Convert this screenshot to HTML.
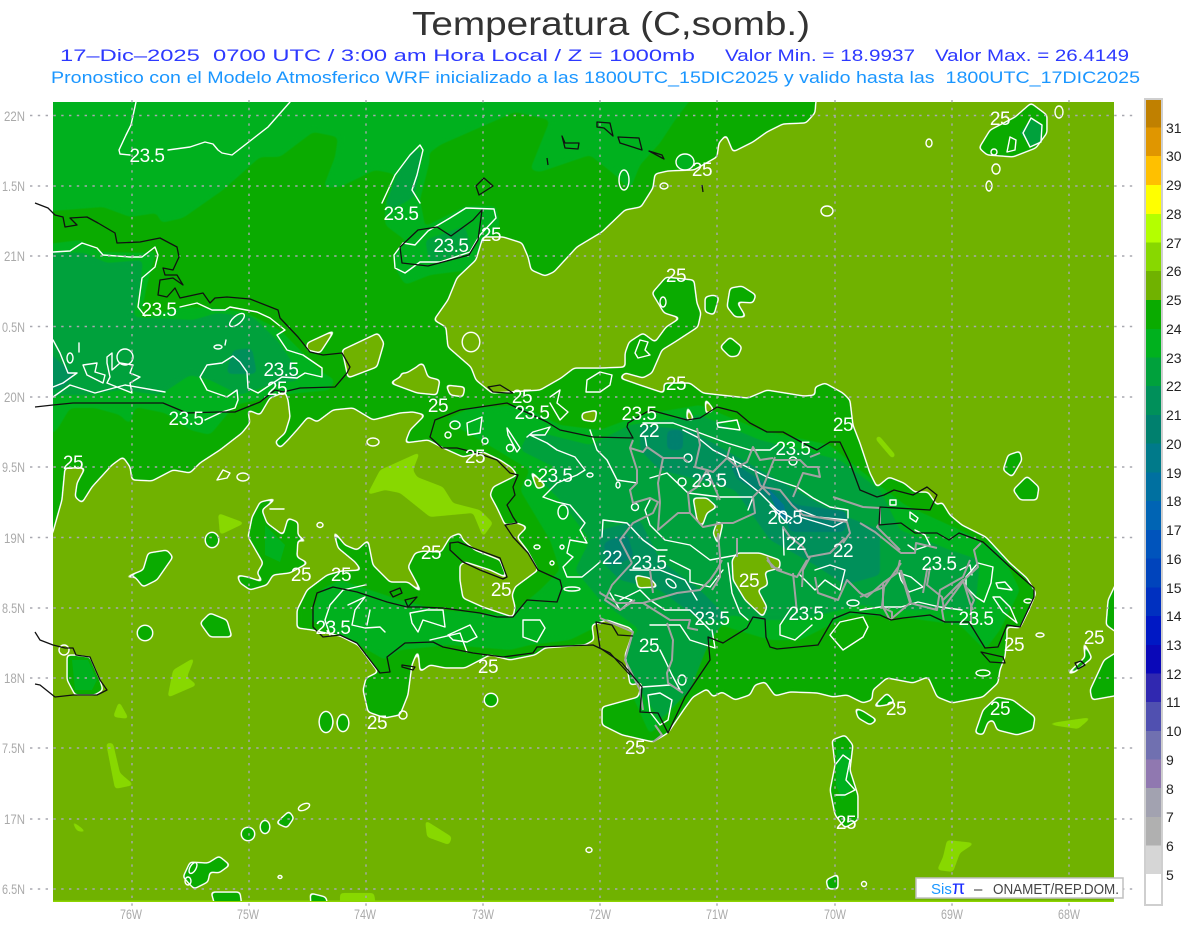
<!DOCTYPE html>
<html><head><meta charset="utf-8"><title>Temperatura</title>
<style>html,body{margin:0;padding:0;background:#fff}svg{display:block;font-family:"Liberation Sans",sans-serif}
.w{fill:none;stroke:#fff;stroke-width:1.4;stroke-linejoin:round;stroke-linecap:round}
.k{fill:none;stroke:#111;stroke-width:1.3;stroke-linejoin:round}
.g{fill:none;stroke:#a3a3a3;stroke-width:2;stroke-linejoin:round}
.l text{fill:#fff;font-size:19px;text-anchor:middle;letter-spacing:-.5px}
.c text{fill:#222;font-size:14px}
.a text{fill:#aaa;font-size:14px}
</style></head><body>
<svg width="1200" height="927" viewBox="0 0 1200 927" xmlns="http://www.w3.org/2000/svg">
<defs>
<clipPath id="p"><rect x="53" y="102" width="1061" height="799"/></clipPath>
<filter id="f" filterUnits="userSpaceOnUse" x="0" y="60" width="1200" height="880" color-interpolation-filters="sRGB">
<feGaussianBlur stdDeviation="1.8"/><feComponentTransfer><feFuncA type="linear" slope="8" intercept="-3.5"/></feComponentTransfer>
</filter>
<filter id="z" filterUnits="userSpaceOnUse" x="0" y="60" width="1200" height="880" color-interpolation-filters="sRGB">
<feGaussianBlur stdDeviation="3"/><feComponentTransfer><feFuncA type="linear" slope="5" intercept="-2"/></feComponentTransfer>
</filter>
<filter id="o" filterUnits="userSpaceOnUse" x="0" y="60" width="1200" height="880" color-interpolation-filters="sRGB">
<feGaussianBlur in="SourceAlpha" stdDeviation="1.8" result="b"/>
<feComponentTransfer in="b" result="i"><feFuncA type="linear" slope="8" intercept="-4.8"/></feComponentTransfer>
<feComponentTransfer in="b" result="u"><feFuncA type="linear" slope="8" intercept="-2.4"/></feComponentTransfer>
<feFlood flood-color="#fff" result="w"/>
<feComposite in="w" in2="u" operator="in" result="wo"/>
<feComposite in="wo" in2="i" operator="out"/>
</filter>
<path id="a" d="M817,90 815,113 806,123 783,124 767,132 753,142 733,152 726,135 719,143 717,157 694,170 668,171 655,174 653,188 641,207 625,210 602,232 577,247 554,272 545,276 531,270 528,257 522,243 503,237 483,237 476,260 457,278 448,300 434,320 446,327 448,347 471,367 476,380 492,393 540,390 561,378 574,368 600,368 625,367 625,353 629,342 643,333 655,342 666,327 680,318 664,313 652,293 666,277 694,280 697,303 701,313 698,327 675,342 662,350 652,373 643,378 625,373 620,378 640,385 664,393 664,383 690,383 703,393 748,398 767,390 804,396 815,395 815,387 825,383 843,393 850,400 853,425 860,443 870,473 877,487 889,477 904,483 915,492 928,492 937,505 942,502 950,515 962,525 986,537 1010,563 1027,578 1036,593 1029,610 1020,628 1007,627 1007,637 1005,657 1000,670 998,683 983,697 952,703 937,697 928,677 913,683 887,678 873,690 872,700 863,703 847,695 833,697 817,693 790,692 775,696 765,682 755,685 750,695 735,700 722,692 713,697 707,689 693,697 685,708 668,733 653,742 622,735 602,725 602,707 620,702 638,697 642,683 630,685 625,655 633,632 630,628 607,620 592,625 594,640 585,645 545,648 535,655 510,660 490,655 465,668 445,668 430,665 420,672 418,650 412,665 408,695 400,715 385,718 368,712 363,690 366,678 378,672 358,645 340,636 312,630 297,628 297,610 307,590 327,575 341,571 361,570 355,562 338,548 333,530 345,545 357,550 368,540 373,565 390,582 408,582 422,593 408,567 415,553 423,551 441,552 450,537 460,533 463,540 475,550 500,560 507,578 490,570 465,562 460,565 460,580 463,598 483,607 513,617 515,607 512,595 515,587 538,570 527,550 517,537 527,527 517,523 505,525 497,508 490,495 493,487 517,475 512,468 500,460 483,452 463,457 443,448 428,440 405,443 410,430 425,415 413,412 400,413 373,420 353,408 333,410 317,422 308,417 297,430 288,440 280,448 275,442 285,433 290,417 288,400 285,392 270,398 260,415 248,410 250,423 242,433 220,450 200,463 190,473 173,470 152,481 132,480 130,467 123,457 112,465 92,487 82,503 75,497 77,483 85,468 65,468 62,500 53,532 40,560 40,90Z"/>
<clipPath id="ac"><use href="#a"/></clipPath>
<g id="hl">
<path d="M307,343 335,330 320,353 307,350Z"/>
<path d="M342,350 378,333 384,343 377,367 348,378Z"/>
<path d="M390,383 423,363 428,377 440,380 437,395 417,393Z"/>
<path d="M446,385 465,387 463,397 450,395Z"/>
<path d="M582,413 597,410 595,422 582,420Z"/>
<path d="M530,470 546,486 537,489Z"/>
<path d="M693,498 707,498 717,507 707,513 702,527 697,520Z"/>
<path d="M717,522 723,523 718,545 713,533Z"/>
<path d="M705,398 714,410 706,414Z"/>
<path d="M687,405 694,420 687,420Z"/>
<path d="M732,560 737,553 760,553 780,560 780,568 765,572 768,585 758,590 767,607 763,617 745,600 733,580Z"/>
<path d="M635,575 650,578 658,587 638,588Z"/>
<path d="M400,373 413,373 420,363 422,378 408,387Z"/>
<ellipse cx="471" cy="342" rx="9" ry="10"/>
</g>
<g id="bl">
<path d="M979,148 990,130 1015,117 1031,103 1047,115 1047,133 1036,148 1013,157 987,155Z"/>
<path d="M705,297 713,295 719,297 714,315 705,312Z"/>
<path d="M728,300 730,288 742,286 756,295 753,303 737,302 746,317 735,317 727,307Z"/>
<path d="M730,337 742,347 738,356 730,357 720,347Z"/>
<path d="M123,578 143,570 148,553 167,550 173,557 157,580 143,587 135,577Z"/>
<ellipse cx="212" cy="540" rx="7" ry="8"/><circle cx="145" cy="633" r="8"/>
<path d="M200,623 210,613 227,620 232,637 210,637Z"/>
<path d="M277,498 260,502 252,517 248,537 263,563 257,573 263,582 248,577 237,575 240,583 250,590 267,585 273,575 290,573 308,563 297,557 298,540 308,543 298,535 298,522 288,518 283,535 267,523 262,510Z"/>
<path d="M67,655 75,655 90,657 100,680 103,690 95,695 75,695 67,680Z"/>
<path d="M211,892 240,892 242,906 215,906Z"/>
<path d="M310,893 326,897 328,906 311,906Z"/>
<path d="M183,877 190,862 208,863 219,856 230,865 219,873 210,872 208,882 194,889Z"/>
<circle cx="248" cy="834" r="7"/><ellipse cx="265" cy="827" rx="5" ry="7"/>
<path d="M276,823 289,811 294,818 287,828Z"/>
<ellipse cx="326" cy="722" rx="7" ry="11"/><ellipse cx="343" cy="723" rx="6" ry="9"/><circle cx="491" cy="700" r="7"/>
<path d="M832,740 845,735 853,745 850,770 858,795 858,820 845,828 835,815 830,790 835,765Z"/>
<path d="M975,733 983,710 997,697 1013,700 1035,717 1033,730 1017,735 997,730 993,720 988,722 983,735Z"/>
<path d="M855,708 863,711 877,720 870,725 858,718Z"/>
<path d="M873,707 887,693 895,702 887,705Z"/>
<path d="M1066,675 1085,657 1083,640 1092,658 1075,672Z"/>
<path d="M1120,650 1104,660 1090,690 1092,700 1120,695Z"/>
<path d="M1120,575 1108,600 1106,625 1120,635Z"/>
<path d="M1003,470 1008,455 1020,451 1022,460 1012,477Z"/>
<path d="M1013,490 1027,476 1039,487 1037,500 1020,500Z"/>
<path d="M826,880 838,874 838,889 828,889Z"/>
</g>
</defs>
<rect width="1200" height="927" fill="#fff"/>
<text x="611" y="35" font-size="33" fill="#333" text-anchor="middle" textLength="398" lengthAdjust="spacingAndGlyphs">Temperatura (C,somb.)</text>
<text x="60" y="61" font-size="17" fill="#2d39ff" textLength="635" lengthAdjust="spacingAndGlyphs" xml:space="preserve">17–Dic–2025  0700 UTC / 3:00 am Hora Local / Z = 1000mb</text>
<text x="725" y="61" font-size="17" fill="#2d39ff" textLength="190" lengthAdjust="spacingAndGlyphs">Valor Min. = 18.9937</text>
<text x="935" y="61" font-size="17" fill="#2d39ff" textLength="194" lengthAdjust="spacingAndGlyphs">Valor Max. = 26.4149</text>
<text x="51" y="83" font-size="17" fill="#1a96ff" textLength="1089" lengthAdjust="spacingAndGlyphs" xml:space="preserve">Pronostico con el Modelo Atmosferico WRF inicializado a las 1800UTC_15DIC2025 y valido hasta las  1800UTC_17DIC2025</text>

<rect x="53" y="102" width="1061" height="800" fill="#70b200"/>
<rect x="53" y="900.5" width="1061" height="1.5" fill="#8cd400"/>
<g clip-path="url(#p)">
<!-- 26 patches -->
<g fill="#88d800" filter="url(#f)">
<path d="M367,495 380,470 420,452 413,470 417,477 443,487 453,503 480,510 493,523 483,537 473,513 430,517 400,493 385,490Z"/>
<path d="M218,513 245,523 220,535Z"/>
<path d="M195,657 187,677 197,685 167,698 165,710 173,670Z"/>
<path d="M113,717 119,701 129,719Z"/>
<path d="M106,743 113,743 120,773 134,785 115,789Z"/>
<path d="M70,819 88,833 77,831Z"/>
<path d="M425,820 452,837 449,845 427,837Z"/>
<path d="M340,893 374,893 376,906 340,906Z"/>
<path d="M947,840 975,843 960,853 953,872 937,870 943,857Z"/>
<path d="M1044,724 1092,717 1078,729Z"/>
<path d="M877,437 894,457" stroke="#88d800" stroke-width="5" fill="none"/>
</g>
<!-- 25 contour region -->
<use href="#a" fill="#0aab00" filter="url(#f)"/>
<g clip-path="url(#ac)">
<!-- zone 23-24 -->
<g fill="#00b11e" filter="url(#z)">
<path d="M40,90 698,90 675,120 660,143 640,165 630,190 615,175 590,155 540,172 530,170 550,120 515,112 440,145 400,175 375,170 340,187 323,188 335,157 338,137 313,132 280,157 260,157 223,190 183,218 161,223 157,213 130,217 103,207 40,212Z"/>
<path d="M40,245 80,240 100,252 150,253 157,248 147,285 140,320 180,307 215,308 245,312 280,330 303,353 322,372 335,380 330,390 280,395 235,405 210,435 190,430 165,413 135,407 130,425 120,415 95,408 70,408 57,430 40,440Z"/>
<path d="M445,420 470,408 520,405 560,425 600,430 640,415 700,405 760,430 830,445 860,470 905,505 960,530 1000,550 1020,590 1000,630 985,650 960,625 900,617 850,615 800,640 770,640 720,625 700,660 680,700 650,735 630,690 600,625 570,640 530,645 510,650 450,645 400,650 385,660 350,640 310,620 320,590 340,580 400,600 440,610 510,615 540,590 560,570 550,540 520,490 530,470 480,440Z"/>
<path d="M385,205 395,175 410,155 425,140 430,160 420,200 425,225 405,240 385,225Z"/>
<path d="M395,268 394,255 403,243 428,225 466,206 496,206 500,225 480,250 470,270 430,275 405,285Z"/>
</g>
<!-- zone 22-23 -->
<g fill="#00a13c" filter="url(#z)">
<path d="M40,252 85,253 107,263 143,260 140,287 133,317 193,320 217,313 253,317 277,340 293,363 300,380 270,385 240,395 210,380 190,375 160,395 120,390 90,395 60,395 40,400Z"/>
<path d="M630,425 700,415 760,440 840,460 880,490 900,530 950,550 980,560 975,610 900,610 860,605 800,620 760,620 730,615 710,640 690,690 660,720 640,690 615,650 640,630 600,600 575,570 590,540 560,500 540,480 560,470 520,450 530,430 590,445Z"/>
<path d="M385,205 397,175 412,152 422,148 419,175 414,197 395,208Z"/>
<path d="M425,240 465,226 472,250 430,264Z"/>
<path d="M470,505 500,490 505,510 480,520Z" fill="none"/>
</g>
<!-- zone 21-22 -->
<g fill="#00905a" filter="url(#z)">
<path d="M640,425 690,430 760,470 830,510 880,530 880,575 845,585 815,565 770,540 735,490 700,480 660,470 640,450Z"/>
<path d="M600,530 640,520 660,560 700,590 730,620 700,620 660,590 620,580 600,560Z"/>
<path d="M40,345 75,375 62,389 40,390Z"/>
<path d="M233,350 252,348 257,374 226,374Z"/>
</g>
<!-- zone 20-21 -->
<g fill="#00806e" filter="url(#z)">
<path d="M667,430 683,430 683,450 667,450Z"/>
<path d="M727,458 767,485 797,505 847,511 845,532 790,532 783,509 763,495 737,479Z"/>
<path d="M603,543 627,533 634,557 610,567Z"/>
</g>
<path fill="#007590" d="M768,488 784,505 788,524 778,515Z"/>
</g>
<!-- A outline, holes, blobs -->
<use href="#a" fill="#fff" filter="url(#o)"/>
<use href="#hl" fill="#70b200" filter="url(#f)"/>
<use href="#hl" fill="#fff" filter="url(#o)"/>
<use href="#bl" fill="#0aab00" filter="url(#f)"/>
<g fill="#00b11e">
<path d="M837,750 850,750 850,790 842,800 836,785Z"/>
<path d="M72,660 88,660 97,680 92,690 75,690Z"/>
<path d="M265,525 285,545 280,562 265,555Z"/>
<path d="M685,154a8,8 0 1,0 .1,0Z" />
</g>
<path fill="#00a13c" d="M1020,133 1031,118 1043,125 1042,142 1031,147Z"/>
<use href="#bl" fill="#fff" filter="url(#o)"/>
<!-- white contours -->
<g class="w">
<ellipse cx="929" cy="143" rx="3" ry="4"/><ellipse cx="1059" cy="112" rx="4" ry="6"/><ellipse cx="996" cy="169" rx="4" ry="5"/><ellipse cx="989" cy="186" rx="3" ry="5"/><ellipse cx="827" cy="211" rx="6" ry="5"/><ellipse cx="664" cy="186" rx="4" ry="3"/>
<path d="M217,480 223,470 230,473 227,478Z"/><ellipse cx="243" cy="477" rx="6" ry="4"/><ellipse cx="373" cy="442" rx="6" ry="4"/><ellipse cx="320" cy="525" rx="3" ry="2.5"/><ellipse cx="589" cy="850" rx="3" ry="2.5"/>
<circle cx="64" cy="650" r="5"/><circle cx="403" cy="715" r="4"/><ellipse cx="304" cy="807" rx="6" ry="3" transform="rotate(-25 304 807)"/><circle cx="864" cy="884" r="2.5"/>
<path d="M136,102 131,125 126,135 119,150 120,154 130,155"/>
<path d="M290,102 268,127 232,155 222,153 218,150 213,144 205,142 190,147 168,150"/>
<path d="M53,252 70,251 82,243 97,248 103,255 130,257 142,257 155,247 158,255 155,267 142,278 138,307 145,316"/>
<path d="M180,307 197,303 212,310 225,310 230,307 257,312 270,318 285,330 277,335 287,350 303,355 322,368 322,377 305,373 297,378 282,377 270,385 258,393 248,388 247,372 240,362 233,356 222,363 207,365 200,377 207,390 227,397 237,390 238,400 235,408 222,412 205,420"/>
<path d="M53,340 60,353 68,373 77,373 63,383 53,387"/>
<ellipse cx="70" cy="358" rx="3" ry="5"/><circle cx="125" cy="357" r="8"/>
<path d="M79,343 79,352"/>
<path d="M83,365 97,363 95,372 105,375 103,383 87,375Z"/>
<path d="M107,357 112,353 112,370 120,363 133,365 130,373 140,377 130,383 132,393 117,387 107,383 110,377 107,363Z"/>
<path d="M53,397 70,385 95,393 125,385 165,392"/>
<ellipse cx="237" cy="320" rx="9" ry="4" transform="rotate(-40 237 320)"/>
<ellipse cx="218" cy="347" rx="4" ry="2"/><path d="M226,340 225,345"/>
<path d="M382,203 395,175 410,155 420,145 423,150 417,175 412,190 420,203"/>
<path d="M466,208 494,209 496,218 480,235 470,252 440,262 420,262 405,273 395,268 394,255 403,243 415,245 428,231 450,218Z"/>
<ellipse cx="685" cy="162" rx="9" ry="8"/><ellipse cx="624" cy="180" rx="5" ry="10"/>
<path d="M1023,133 1031,118 1042,125 1041,142 1030,147Z"/><path d="M1007,152 1010,137 1016,140 1015,150Z"/><circle cx="994" cy="152" r="3"/>
<ellipse cx="663" cy="302" rx="3" ry="5"/>
<path d="M635,353 640,340 648,342 645,350 650,355 638,358Z"/>
<path d="M587,380 600,372 612,375 610,385 600,392 586,392Z"/>
<path d="M507,428 520,448 517,452 508,435Z"/>
<path d="M467,423 482,417 480,433 468,435Z"/>
<ellipse cx="455" cy="425" rx="5" ry="4"/><circle cx="448" cy="435" r="3"/><circle cx="485" cy="441" r="3"/><circle cx="510" cy="448" r="3.5"/>
<path d="M527,437 533,432 550,427 545,435 530,435 547,443 557,450 575,457 585,470 577,475 557,483 543,497 557,502 570,505 585,523 580,530 587,543 570,540 567,553 573,557 563,567 567,577 582,577 593,568 600,562"/>
<path d="M550,397 560,390 557,403 568,412 560,420 550,403"/>
<path d="M590,430 597,450 607,460 617,480 637,483"/>
<path d="M602,537 603,520 627,523 643,540 657,550 667,550"/>
<ellipse cx="563" cy="512" rx="5" ry="7"/><circle cx="528" cy="483" r="3"/><ellipse cx="590" cy="475" rx="3" ry="2"/><ellipse cx="618" cy="485" rx="2" ry="3"/><ellipse cx="537" cy="547" rx="3" ry="2"/><ellipse cx="562" cy="547" rx="2" ry="2"/><ellipse cx="572" cy="589" rx="8" ry="2"/><ellipse cx="552" cy="563" rx="2" ry="2"/>
<path d="M410,613 427,610 443,610 445,627 423,620 418,632 412,623Z"/>
<path d="M448,635 470,625 477,637 467,642 453,640Z"/>
<path d="M523,620 540,620 545,628 537,642 523,637Z"/>
<path d="M365,585 343,590 330,605 325,620 330,635"/>
<path d="M348,605 365,597 355,610 352,625 365,628 380,627 385,632"/>
<path d="M370,610 367,625"/>
<path d="M430,640 460,633 467,652"/>
<path d="M643,423 673,423 700,433 727,443 750,450 770,450 777,445"/>
<path d="M717,423 737,420 740,430 718,427Z"/>
<path d="M683,430 697,437 713,450 733,460 767,477 797,487 813,498 830,507 848,510 848,518"/>
<path d="M645,437 647,448"/>
<circle cx="682" cy="482" r="4"/><circle cx="688" cy="458" r="4"/><circle cx="793" cy="461" r="4"/><circle cx="635" cy="507" r="3.5"/>
<path d="M650,478 667,473 688,493 720,497 753,497 748,510"/>
<path d="M733,457 740,477 760,493 777,510 792,518 787,523 770,505"/>
<path d="M800,510 817,517 847,520 833,527 820,523 800,517Z"/>
<path d="M650,500 645,510 650,525 665,540 690,545 710,560 737,555"/>
<path d="M783,527 784,555"/>
<path d="M668,579a6,3 40 1,0 .1,0Z"/>
<path d="M670,560 690,570 690,582 710,587 723,570"/>
<path d="M728,563 732,593 740,613 748,620"/>
<path d="M630,570 660,570 685,580 697,600"/>
<path d="M620,600 640,590 650,600 665,610 690,610 700,620 710,630"/>
<path d="M650,625 680,625 690,640 715,648 712,630"/>
<path d="M610,593 620,610 632,600 615,595"/>
<path d="M642,687 670,685 680,690 672,675 665,660 660,650"/>
<path d="M648,695 660,693 672,700 668,720 660,725 650,712Z"/>
<ellipse cx="682" cy="680" rx="4" ry="5"/>
<path d="M790,610 780,625 780,635 795,640 812,625"/>
<path d="M830,635 840,622 863,617 868,627 863,637 843,650Z"/>
<ellipse cx="853" cy="603" rx="6" ry="3"/><ellipse cx="983" cy="673" rx="7" ry="3"/>
<path d="M800,575 815,590 825,580 840,590 845,570 830,565 815,570"/>
<path d="M860,610 880,607 901,607 918,602 940,607 962,610"/>
<path d="M966,587 976,597 984,602 991,583 993,567 978,563 966,577Z"/>
<path d="M996,583 1005,582 1012,590 998,588Z"/>
<path d="M993,597 1000,597 1010,607 1017,623 1003,612Z"/>
<ellipse cx="1028" cy="601" rx="4" ry="2"/>
<path d="M899,573 911,577 923,587 909,592 901,580Z"/>
<path d="M908,545 915,550 930,545 925,535 915,530"/>
<path d="M960,570 970,565 972,575"/>
<path d="M890,500 896,500 896,505 890,505Z"/>
<path d="M910,512 918,518 916,522 910,518Z"/>
<path d="M835,765 843,755 850,760 846,780 855,790 845,795 835,795"/>
<ellipse cx="193" cy="868" rx="3" ry="6" transform="rotate(30 193 868)"/><ellipse cx="188" cy="881" rx="3" ry="4"/>
<ellipse cx="280" cy="877" rx="2" ry="1.5"/>
<path d="M270,509 284,509"/>
<ellipse cx="1040" cy="635" rx="4" ry="2"/>
</g>
</g>
<!-- grid -->
<g stroke="#a8a8b0" stroke-width="1.4" stroke-dasharray="2.4 5.4" fill="none">
<path d="M30,115.5H1136M30,186H1136M30,256H1136M30,326.5H1136M30,397H1136M30,467H1136M30,537.5H1136M30,608H1136M30,678H1136M30,748H1136M30,819H1136M30,889H1136"/>
<path d="M132,100V908M249,100V908M366,100V908M483,100V908M600,100V908M717,100V908M835,100V908M952,100V908M1069,100V908"/>
</g>
<!-- gray admin lines -->
<g class="g">
<path d="M633,440 630,448 637,470 637,483 630,490 633,503 650,498 658,502 653,513 633,523 620,540 632,563"/>
<path d="M630,448 643,452 647,447 663,458 683,458 688,462"/>
<path d="M697,428 700,445 695,467 707,470 720,500"/>
<path d="M730,447 727,458 713,472 707,470"/>
<path d="M727,458 737,467 747,462 753,447 760,460 773,458"/>
<path d="M775,457 763,487 753,497 755,513 733,523 723,523 703,527 690,513 678,513 658,530 660,502"/>
<path d="M663,458 658,483 660,502"/>
<path d="M690,513 688,493 697,487 707,470"/>
<path d="M763,487 780,490 792,505 803,515 847,522 850,533 843,543"/>
<path d="M807,467 818,467 820,477 803,473 793,497"/>
<path d="M810,457 820,453"/>
<path d="M773,460 800,460 807,467"/>
<path d="M833,497 863,507 880,508 880,523 877,527 900,550"/>
<path d="M783,527 790,537 803,547 808,557 830,553 845,538"/>
<path d="M718,533 720,557 720,577 712,590"/>
<path d="M737,538 737,557"/>
<path d="M767,557 772,567 782,570"/>
<path d="M810,557 803,570 802,587"/>
<path d="M600,593 617,603 643,603 677,593 700,590 710,580 717,570 722,560"/>
<path d="M643,603 670,620 690,620 688,628 698,630"/>
<path d="M600,618 633,632 625,660 640,690 643,710"/>
<path d="M667,623 673,640 672,660 667,673 668,683 683,693"/>
<path d="M650,570 653,593"/>
<path d="M767,560 777,570 797,577 807,560"/>
<path d="M793,573 797,613"/>
<path d="M815,577 818,593 838,600 847,580 860,593 867,597 883,583 883,607 890,620"/>
<path d="M883,583 897,573 900,560"/>
<path d="M900,570 910,603 937,610 940,590 963,577 970,560"/>
<path d="M927,570 923,593"/>
<path d="M910,603 890,620"/>
<path d="M943,600 963,580 970,603 973,610"/>
<path d="M860,523 875,532 901,553 915,553 916,543 937,548"/>
<path d="M981,543 974,550 978,567 964,580 942,610 944,622"/>
<path d="M962,580 974,600 971,607 971,622"/>
<path d="M901,563 884,587 882,607 892,612 892,618"/>
<path d="M860,597 884,587"/>
<path d="M901,570 911,602"/>
<path d="M930,567 927,585 942,597 944,610"/>
<path d="M755,470 760,485 770,495"/>
<path d="M632,563 612,585 605,600 620,610 635,600"/>
<path d="M653,742 662,735 655,725"/>
</g>
<!-- black coast -->
<g class="k">
<path d="M460,410 507,403 528,413 547,422 560,430 593,437 633,438 627,427 628,423 650,410 687,420 700,418 717,407 737,412 750,423 767,432 783,432 803,443 817,450 830,442 840,442 850,463 860,490 877,497 884,495 894,490 913,495 927,487 937,495 930,510 880,507 879,525 901,523 915,533 937,533 949,540 959,533 983,542 1010,567 1034,588 1034,597 1020,627 1007,625 998,647 985,648 969,622 945,622 930,615 903,618 891,620 880,615 860,613 850,612 833,619 818,645 777,649 770,647 766,637 765,619 753,617 747,628 723,643 708,637 710,660 685,697 668,733 663,723 658,713 640,712 642,687 622,663 600,648 596,622 612,625 618,635 633,636"/>
<path d="M460,410 435,420 430,437 442,448 457,448 477,453 497,460 510,473 518,475 513,487 515,495 507,505 513,517 517,523 505,525 513,537 528,553 538,570 560,580 562,588 557,602 527,600 513,617 497,617 480,613 443,608 420,607 407,607 387,602 357,592 333,587 317,593 313,607 313,627 323,637 340,635 357,643 380,673 390,672 387,657 405,643 433,642 443,647 473,653 503,657 533,653 537,647 593,645 610,653 630,675"/>
<path d="M981,652 1003,657 1005,663 990,662Z"/>
<path d="M450,543 458,542 473,548 500,558 507,577 503,579 480,570 463,562 450,550Z"/>
<path d="M488,387 500,385 513,393 507,393 493,392Z"/>
<path d="M402,665 415,667 413,670 402,667Z"/>
<path d="M390,592 400,588 402,593 393,597Z M405,600 417,597 408,607Z"/>
<path d="M597,122 610,123 613,136 604,128 597,127Z"/>
<path d="M618,137 639,138 642,150 620,143Z"/>
<path d="M649,151 662,155 664,159Z"/>
<path d="M562,136 565,143 579,143 578,149 565,148Z"/>
<path d="M547,158 548,165M702,185 703,192"/>
<path d="M476,186 484,178 493,186 479,195Z"/>
<path d="M482,210 473,220 451,236 437,227 418,230 400,247 402,263 428,266 469,255 478,240Z"/>
<path d="M35,203 48,208 55,215 63,217 65,227 77,225 70,218 87,217 98,223 115,233 117,243 140,242 160,238 177,247 179,257 173,270 163,268 165,275 177,275 183,285 173,278 160,280 158,295 167,297 175,288 180,298 203,293 210,303 215,298 227,297 250,299 278,310 280,318 298,337 310,352 323,355 342,353 350,367 347,373 335,387 300,388 283,392 275,390 260,402 235,412 218,412 187,413 163,403 147,403 117,403 73,403 53,405 35,407"/>
<path d="M35,632 40,640 53,645 65,648 73,648 76,655 90,657 100,680 107,690 97,695 73,695 55,697 40,685 35,684"/>
<path d="M1075,663 1081,661 1085,665 1078,669Z"/>
</g>
<!-- contour labels -->
<g class="l">
<text x="147" y="162">23.5</text><text x="159" y="316">23.5</text><text x="186" y="425">23.5</text><text x="281" y="376">23.5</text><text x="277" y="395">25</text><text x="73" y="469">25</text><text x="438" y="412">25</text><text x="522" y="403">25</text><text x="532" y="419">23.5</text><text x="676" y="282">25</text><text x="676" y="390">25</text><text x="401" y="220">23.5</text><text x="451" y="252">23.5</text><text x="491" y="241">25</text><text x="702" y="176">25</text><text x="1000" y="125">25</text><text x="639" y="420">23.5</text><text x="649" y="437">22</text><text x="843" y="431">25</text><text x="793" y="455">23.5</text><text x="555" y="482">23.5</text><text x="475" y="463">25</text><text x="709" y="487">23.5</text><text x="785" y="524">20.5</text><text x="796" y="550">22</text><text x="843" y="557">22</text><text x="612" y="564">22</text><text x="649" y="569">23.5</text><text x="431" y="559">25</text><text x="301" y="581">25</text><text x="341" y="581">25</text><text x="749" y="587">25</text><text x="501" y="596">25</text><text x="939" y="570">23.5</text><text x="333" y="634">23.5</text><text x="712" y="625">23.5</text><text x="806" y="620">23.5</text><text x="976" y="625">23.5</text><text x="1014" y="651">25</text><text x="1094" y="644">25</text><text x="649" y="652">25</text><text x="488" y="673">25</text><text x="377" y="729">25</text><text x="896" y="715">25</text><text x="1000" y="715">25</text><text x="635" y="754">25</text><text x="846" y="829">25</text>
</g>
<!-- axis labels -->
<g class="a">
<text x="4" y="121" textLength="21" lengthAdjust="spacingAndGlyphs">22N</text><text x="2" y="191" textLength="23" lengthAdjust="spacingAndGlyphs">1.5N</text><text x="4" y="261" textLength="21" lengthAdjust="spacingAndGlyphs">21N</text><text x="2" y="332" textLength="23" lengthAdjust="spacingAndGlyphs">0.5N</text><text x="4" y="402" textLength="21" lengthAdjust="spacingAndGlyphs">20N</text><text x="2" y="472" textLength="23" lengthAdjust="spacingAndGlyphs">9.5N</text><text x="4" y="543" textLength="21" lengthAdjust="spacingAndGlyphs">19N</text><text x="2" y="613" textLength="23" lengthAdjust="spacingAndGlyphs">8.5N</text><text x="4" y="683" textLength="21" lengthAdjust="spacingAndGlyphs">18N</text><text x="2" y="753" textLength="23" lengthAdjust="spacingAndGlyphs">7.5N</text><text x="4" y="824" textLength="21" lengthAdjust="spacingAndGlyphs">17N</text><text x="2" y="894" textLength="23" lengthAdjust="spacingAndGlyphs">6.5N</text>
<text x="120" y="919" textLength="22" lengthAdjust="spacingAndGlyphs">76W</text><text x="237" y="919" textLength="22" lengthAdjust="spacingAndGlyphs">75W</text><text x="354" y="919" textLength="22" lengthAdjust="spacingAndGlyphs">74W</text><text x="472" y="919" textLength="22" lengthAdjust="spacingAndGlyphs">73W</text><text x="589" y="919" textLength="22" lengthAdjust="spacingAndGlyphs">72W</text><text x="706" y="919" textLength="22" lengthAdjust="spacingAndGlyphs">71W</text><text x="824" y="919" textLength="22" lengthAdjust="spacingAndGlyphs">70W</text><text x="941" y="919" textLength="22" lengthAdjust="spacingAndGlyphs">69W</text><text x="1058" y="919" textLength="22" lengthAdjust="spacingAndGlyphs">68W</text>
</g>
<!-- credit -->
<rect x="916" y="878" width="207" height="20" fill="#fff" stroke="#c0c0c0" stroke-width="1.5"/>
<text x="931" y="894" font-size="15" fill="#1a96ff">Sis</text>
<text x="952" y="894" font-size="19" fill="#1a2cff">π</text>
<text x="974" y="894" font-size="15" fill="#333">–</text>
<text x="993" y="894" font-size="15" fill="#444" textLength="126" lengthAdjust="spacingAndGlyphs">ONAMET/REP.DOM.</text>
<!-- colorbar -->
<rect x="1145" y="99" width="17" height="806" fill="#fff" stroke="#cfcfcf" stroke-width="2"/>
<g>
<rect x="1146" y="100" width="15" height="27.5" fill="#c08000"/>
<rect x="1146" y="127.5" width="15" height="28.5" fill="#e09600"/>
<rect x="1146" y="156" width="15" height="29" fill="#ffc000"/>
<rect x="1146" y="185" width="15" height="29" fill="#ffff00"/>
<rect x="1146" y="214" width="15" height="28.5" fill="#b4ff00"/>
<rect x="1146" y="242.5" width="15" height="28.5" fill="#88d800"/>
<rect x="1146" y="271" width="15" height="29" fill="#70b200"/>
<rect x="1146" y="300" width="15" height="29" fill="#0aab00"/>
<rect x="1146" y="329" width="15" height="28.5" fill="#00b11e"/>
<rect x="1146" y="357.5" width="15" height="28.5" fill="#00a13c"/>
<rect x="1146" y="386" width="15" height="29" fill="#00905a"/>
<rect x="1146" y="415" width="15" height="28.5" fill="#00806e"/>
<rect x="1146" y="443.5" width="15" height="29" fill="#007a8a"/>
<rect x="1146" y="472.5" width="15" height="28.5" fill="#0070a0"/>
<rect x="1146" y="501" width="15" height="29" fill="#0064b4"/>
<rect x="1146" y="530" width="15" height="28.5" fill="#0054bc"/>
<rect x="1146" y="558.5" width="15" height="29" fill="#0044bc"/>
<rect x="1146" y="587.5" width="15" height="28.5" fill="#0030c0"/>
<rect x="1146" y="616" width="15" height="29" fill="#0018c4"/>
<rect x="1146" y="645" width="15" height="28.5" fill="#0a08b8"/>
<rect x="1146" y="673.5" width="15" height="28.5" fill="#3028b0"/>
<rect x="1146" y="702" width="15" height="29" fill="#5050b0"/>
<rect x="1146" y="731" width="15" height="28.5" fill="#7070b0"/>
<rect x="1146" y="759.5" width="15" height="28.5" fill="#9078b0"/>
<rect x="1146" y="788" width="15" height="29" fill="#a2a2b0"/>
<rect x="1146" y="817" width="15" height="28.5" fill="#b0b0b0"/>
<rect x="1146" y="845.5" width="15" height="28.5" fill="#d6d6d6"/>
<rect x="1146" y="874" width="15" height="29" fill="#fff"/>
</g>
<g class="c">
<text x="1166" y="133">31</text><text x="1166" y="161">30</text><text x="1166" y="190">29</text><text x="1166" y="219">28</text><text x="1166" y="248">27</text><text x="1166" y="276">26</text><text x="1166" y="305">25</text><text x="1166" y="334">24</text><text x="1166" y="363">23</text><text x="1166" y="391">22</text><text x="1166" y="420">21</text><text x="1166" y="449">20</text><text x="1166" y="478">19</text><text x="1166" y="506">18</text><text x="1166" y="535">17</text><text x="1166" y="564">16</text><text x="1166" y="593">15</text><text x="1166" y="621">14</text><text x="1166" y="650">13</text><text x="1166" y="679">12</text><text x="1166" y="707">11</text><text x="1166" y="736">10</text><text x="1166" y="765">9</text><text x="1166" y="794">8</text><text x="1166" y="822">7</text><text x="1166" y="851">6</text><text x="1166" y="880">5</text>
</g>
</svg>
</body></html>
